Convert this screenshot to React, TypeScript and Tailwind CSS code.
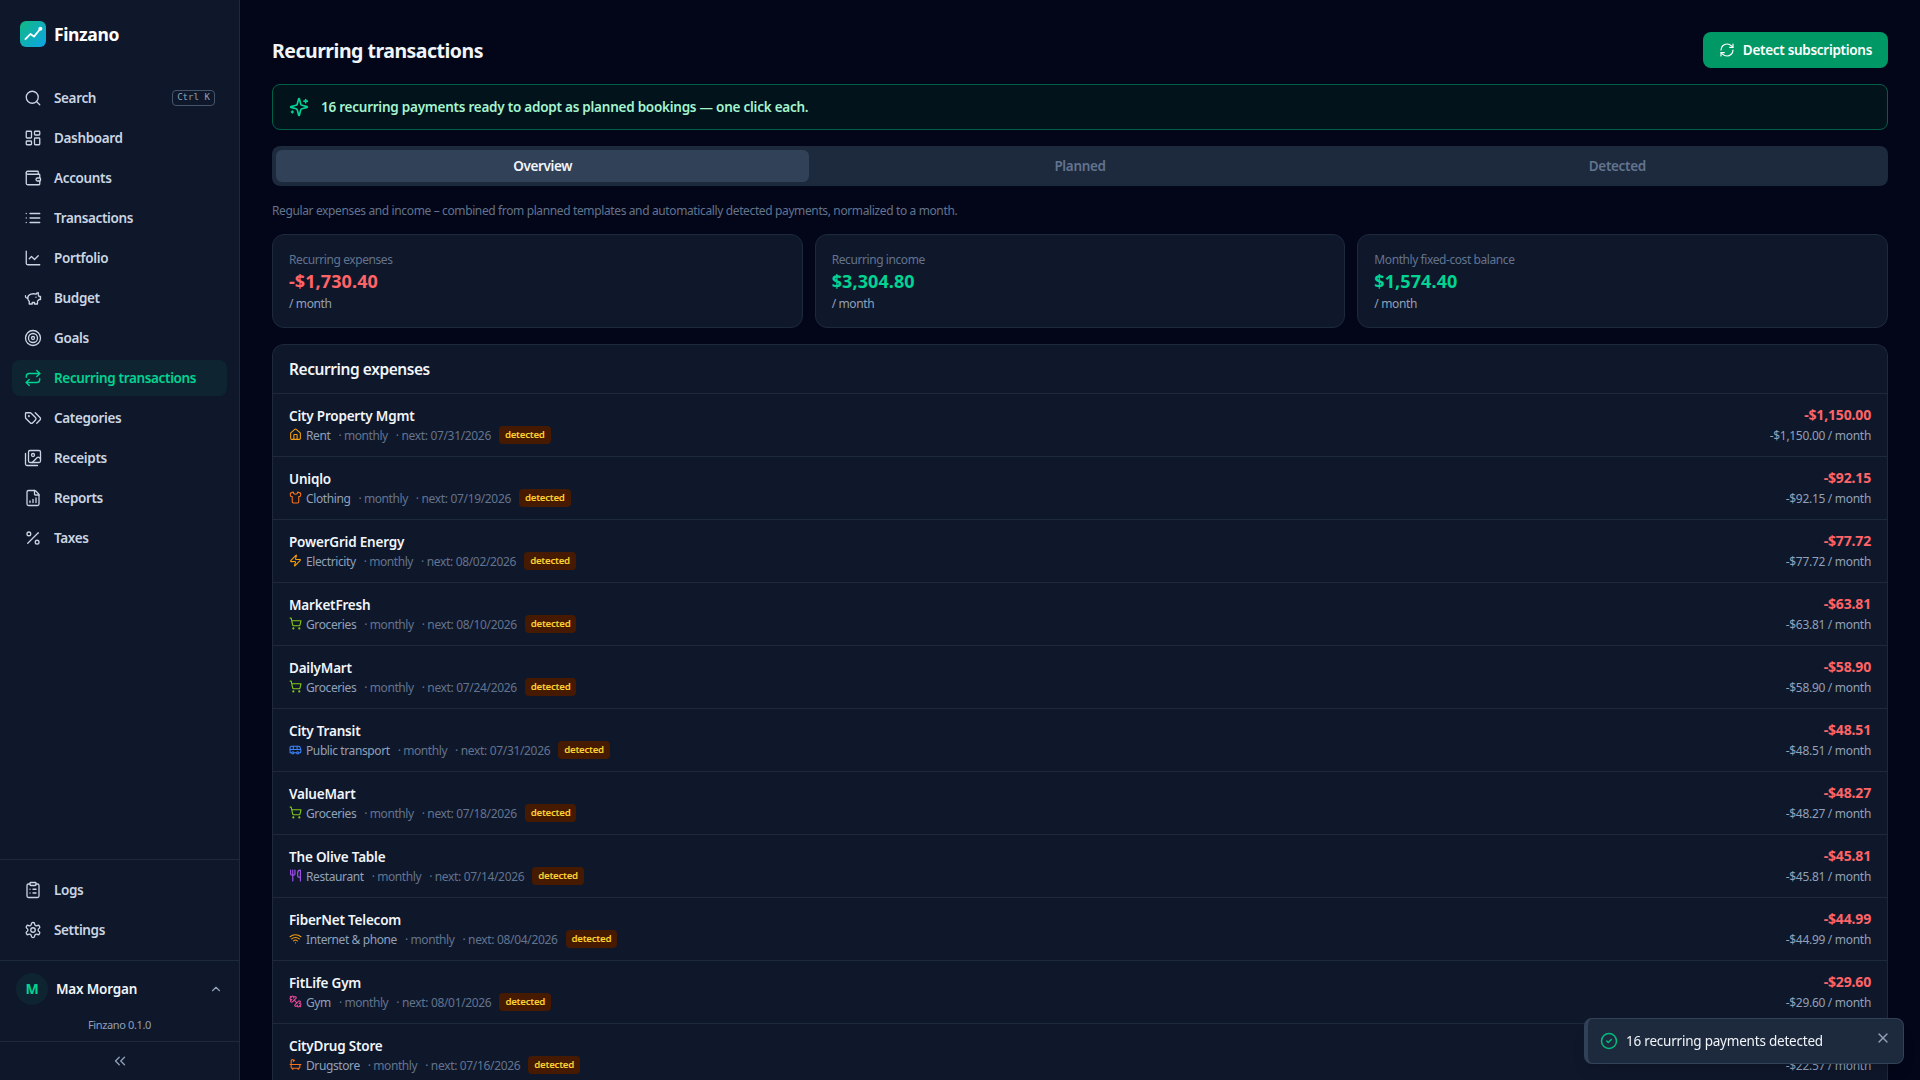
import { clsx } from 'clsx';
import {
	Bath,
	Bus,
	ChartLine,
	ChevronsLeft,
	ChevronUp,
	CircleCheck,
	ClipboardList,
	FileChartColumnIncreasing,
	House,
	LayoutDashboard,
	Percent,
	RefreshCw,
	Repeat,
	Search,
	Shirt,
	ShoppingCart,
	Target,
	Utensils,
	Wallet,
	Wifi,
	X,
	Zap,
} from 'lucide-react';
import React from 'react';

type IconProps = { size?: number; strokeWidth?: number; className?: string };
type Icon = React.ComponentType<IconProps>;
type NavEntry = { label: string; icon: Icon; shortcut?: string };

function makeIcon(content: React.ReactNode): Icon {
	return function CustomIcon({ size = 24, strokeWidth = 2, className }: IconProps) {
		return (
			<svg
				width={size}
				height={size}
				viewBox="0 0 24 24"
				fill="none"
				stroke="currentColor"
				strokeWidth={strokeWidth}
				strokeLinecap="round"
				strokeLinejoin="round"
				className={className}
			>
				{content}
			</svg>
		);
	};
}

const TagsIcon = makeIcon(
	<>
		<path d="m15 5 6.3 6.3a2.4 2.4 0 0 1 0 3.4L17 19" />
		<path d="M9.586 5.586A2 2 0 0 0 8.172 5H3a1 1 0 0 0-1 1v5.172a2 2 0 0 0 .586 1.414L8.29 18.29a2.426 2.426 0 0 0 3.42 0l3.58-3.58a2.426 2.426 0 0 0 0-3.42z" />
		<circle cx="6.5" cy="9.5" r=".5" fill="currentColor" />
	</>,
);

const ImagesIcon = makeIcon(
	<>
		<path d="M18 22H4a2 2 0 0 1-2-2V6" />
		<path d="m22 13-1.296-1.296a2.41 2.41 0 0 0-3.408 0L11 18" />
		<circle cx="12" cy="8" r="2" />
		<rect width="16" height="16" x="6" y="2" rx="2" />
	</>,
);

const ListIcon = makeIcon(
	<>
		<path d="M3 6h.01M3 12h.01M3 18h.01" />
		<path d="M8 6h13M8 12h13M8 18h13" />
	</>,
);

const PiggyIcon = makeIcon(
	<>
		<path d="M19 5c-1.5 0-2.8 1.4-3 2-3.5-1.5-11-.3-11 5 0 1.8 0 3 2 4.5V20h4v-2h3v2h4v-4c1-.5 1.7-1 2-2h2v-4h-2c0-1-.5-1.5-1-2V5z" />
		<path d="M2 9v1c0 1.1.9 2 2 2h1" />
		<path d="M16 11h.01" />
	</>,
);

const SettingsIcon = makeIcon(
	<>
		<path d="M12.22 2h-.44a2 2 0 0 0-2 2v.18a2 2 0 0 1-1 1.73l-.43.25a2 2 0 0 1-2 0l-.15-.08a2 2 0 0 0-2.73.73l-.22.38a2 2 0 0 0 .73 2.73l.15.1a2 2 0 0 1 1 1.72v.51a2 2 0 0 1-1 1.74l-.15.09a2 2 0 0 0-.73 2.73l.22.38a2 2 0 0 0 2.73.73l.15-.08a2 2 0 0 1 2 0l.43.25a2 2 0 0 1 1 1.73V20a2 2 0 0 0 2 2h.44a2 2 0 0 0 2-2v-.18a2 2 0 0 1 1-1.73l.43-.25a2 2 0 0 1 2 0l.15.08a2 2 0 0 0 2.73-.73l.22-.39a2 2 0 0 0-.73-2.73l-.15-.08a2 2 0 0 1-1-1.74v-.5a2 2 0 0 1 1-1.74l.15-.09a2 2 0 0 0 .73-2.73l-.22-.38a2 2 0 0 0-2.73-.73l-.15.08a2 2 0 0 1-2 0l-.43-.25a2 2 0 0 1-1-1.73V4a2 2 0 0 0-2-2z" />
		<circle cx="12" cy="12" r="3" />
	</>,
);

const SparklesIcon = makeIcon(
	<>
		<path d="M9.937 15.5A2 2 0 0 0 8.5 14.063l-6.135-1.582a.5.5 0 0 1 0-.962L8.5 9.936A2 2 0 0 0 9.937 8.5l1.582-6.135a.5.5 0 0 1 .963 0L14.063 8.5A2 2 0 0 0 15.5 9.937l6.135 1.581a.5.5 0 0 1 0 .964L15.5 14.063a2 2 0 0 0-1.437 1.437l-1.582 6.135a.5.5 0 0 1-.963 0z" />
		<path d="M20 3v4M22 5h-4" />
		<path d="M4 17v2M5 18H3" />
	</>,
);

const DumbbellIcon = makeIcon(
	<>
		<path d="M14.4 14.4 9.6 9.6" />
		<path d="M18.657 21.485a2 2 0 1 1-2.829-2.828l-1.767 1.768a2 2 0 1 1-2.829-2.829l6.364-6.364a2 2 0 1 1 2.829 2.829l-1.768 1.767a2 2 0 1 1 2.828 2.829z" />
		<path d="m21.5 21.5-1.4-1.4M3.9 3.9 2.5 2.5" />
		<path d="M6.404 12.768a2 2 0 1 1-2.829-2.829l1.768-1.767a2 2 0 1 1-2.828-2.829l2.828-2.828a2 2 0 1 1 2.829 2.828l1.767-1.768a2 2 0 1 1 2.829 2.829z" />
	</>,
);

const mainNav: NavEntry[] = [
	{ label: 'Search', icon: Search, shortcut: 'Ctrl K' },
	{ label: 'Dashboard', icon: LayoutDashboard },
	{ label: 'Accounts', icon: Wallet },
	{ label: 'Transactions', icon: ListIcon },
	{ label: 'Portfolio', icon: ChartLine },
	{ label: 'Budget', icon: PiggyIcon },
	{ label: 'Goals', icon: Target },
	{ label: 'Recurring transactions', icon: Repeat },
	{ label: 'Categories', icon: TagsIcon },
	{ label: 'Receipts', icon: ImagesIcon },
	{ label: 'Reports', icon: FileChartColumnIncreasing },
	{ label: 'Taxes', icon: Percent },
];

const footerNav: NavEntry[] = [
	{ label: 'Logs', icon: ClipboardList },
	{ label: 'Settings', icon: SettingsIcon },
];

const summary = [
	{ label: 'Recurring expenses', value: '-$1,730.40', negative: true },
	{ label: 'Recurring income', value: '$3,304.80', negative: false },
	{ label: 'Monthly fixed-cost balance', value: '$1,574.40', negative: false },
];

type Expense = {
	name: string;
	category: string;
	icon: Icon;
	color: string;
	next: string;
	amount: string;
};

const expenses: Expense[] = [
	{ name: 'City Property Mgmt', category: 'Rent', icon: House, color: 'text-[#f59e0b]', next: '07/31/2026', amount: '-$1,150.00' },
	{ name: 'Uniqlo', category: 'Clothing', icon: Shirt, color: 'text-[#f97316]', next: '07/19/2026', amount: '-$92.15' },
	{ name: 'PowerGrid Energy', category: 'Electricity', icon: Zap, color: 'text-[#f59e0b]', next: '08/02/2026', amount: '-$77.72' },
	{ name: 'MarketFresh', category: 'Groceries', icon: ShoppingCart, color: 'text-[#84cc16]', next: '08/10/2026', amount: '-$63.81' },
	{ name: 'DailyMart', category: 'Groceries', icon: ShoppingCart, color: 'text-[#84cc16]', next: '07/24/2026', amount: '-$58.90' },
	{ name: 'City Transit', category: 'Public transport', icon: Bus, color: 'text-[#3b82f6]', next: '07/31/2026', amount: '-$48.51' },
	{ name: 'ValueMart', category: 'Groceries', icon: ShoppingCart, color: 'text-[#84cc16]', next: '07/18/2026', amount: '-$48.27' },
	{ name: 'The Olive Table', category: 'Restaurant', icon: Utensils, color: 'text-[#a855f7]', next: '07/14/2026', amount: '-$45.81' },
	{ name: 'FiberNet Telecom', category: 'Internet & phone', icon: Wifi, color: 'text-[#f59e0b]', next: '08/04/2026', amount: '-$44.99' },
	{ name: 'FitLife Gym', category: 'Gym', icon: DumbbellIcon, color: 'text-[#ec4899]', next: '08/01/2026', amount: '-$29.60' },
	{ name: 'CityDrug Store', category: 'Drugstore', icon: Bath, color: 'text-[#f97316]', next: '07/16/2026', amount: '-$22.57' },
];

function Logo() {
	return (
		<svg width="26" height="26" viewBox="0 0 26 26" fill="none">
			<defs>
				<linearGradient id="logo" x1="0" y1="0" x2="26" y2="26" gradientUnits="userSpaceOnUse">
					<stop stopColor="#10b981" />
					<stop offset="1" stopColor="#0ea5e9" />
				</linearGradient>
			</defs>
			<rect width="26" height="26" rx="6" fill="url(#logo)" />
			<path
				d="M5.4 18.2 10.4 13 14 15.6 20.2 8"
				stroke="white"
				strokeWidth="1.8"
				strokeLinecap="round"
				strokeLinejoin="round"
			/>
			<circle cx="20.4" cy="7.8" r="2" fill="white" />
		</svg>
	);
}

function NavItem({ entry, active }: { entry: NavEntry; active?: boolean }) {
	const Icon = entry.icon;
	return (
		<a
			className={clsx(
				'flex h-9 items-center gap-3 rounded-lg px-3 text-[13.5px] font-semibold tracking-[-0.026em]',
				active ? 'bg-[#0e2531] text-emerald-400' : 'text-slate-300',
			)}
		>
			<Icon size={18} strokeWidth={1.75} className="shrink-0" />
			<span className="flex-1">{entry.label}</span>
			{entry.shortcut && (
				<kbd className="flex h-4 items-center rounded border border-slate-600 px-1 font-['DejaVu_Sans_Mono',monospace] text-[9.1px] font-normal tracking-normal text-slate-400">
					{entry.shortcut}
				</kbd>
			)}
		</a>
	);
}

function Sidebar() {
	return (
		<aside className="flex w-60 shrink-0 flex-col border-r border-slate-800 bg-slate-900">
			<div className="flex h-[68px] items-center gap-2 px-5">
				<Logo />
				<span className="text-[17.5px] font-bold tracking-[-0.022em] text-white">Finzano</span>
			</div>
			<nav className="flex flex-1 flex-col gap-1 px-3 pt-3">
				{mainNav.map((entry) => (
					<NavItem key={entry.label} entry={entry} active={entry.label === 'Recurring transactions'} />
				))}
			</nav>
			<div className="flex flex-col gap-1 border-t border-slate-800 p-3">
				{footerNav.map((entry) => (
					<NavItem key={entry.label} entry={entry} />
				))}
			</div>
			<div className="border-t border-slate-800">
				<div className="flex h-14 items-center gap-2 px-4">
					<div className="flex size-8 items-center justify-center rounded-full bg-[#0e2531] text-sm font-bold text-emerald-400">
						M
					</div>
					<span className="flex-1 text-[13.5px] font-semibold tracking-[-0.014em] text-slate-100">Max Morgan</span>
					<ChevronUp size={14} className="text-slate-400" />
				</div>
				<p className="h-6 text-center text-[11px] leading-[16px] tracking-[-0.033em] text-slate-400">Finzano 0.1.0</p>
			</div>
			<div className="flex h-[39px] items-center justify-center border-t border-slate-800 text-slate-400">
				<ChevronsLeft size={18} strokeWidth={1.75} />
			</div>
		</aside>
	);
}

function Tabs() {
	const [tab, setTab] = React.useState('Overview');
	return (
		<div className="grid h-10 grid-cols-3 gap-1 rounded-lg bg-slate-800 p-1">
			{['Overview', 'Planned', 'Detected'].map((name) => (
				<button
					key={name}
					onClick={() => setTab(name)}
					className={clsx(
						'rounded-md text-[13.5px] font-semibold tracking-[-0.026em]',
						tab === name ? 'bg-slate-700 text-slate-100' : 'text-slate-500',
					)}
				>
					{name}
				</button>
			))}
		</div>
	);
}

function ExpenseRow({ expense }: { expense: Expense }) {
	const Icon = expense.icon;
	return (
		<li className="flex h-[63px] shrink-0 items-center justify-between border-b border-slate-800 px-4">
			<div>
				<p className="text-[13.5px] font-semibold leading-5 tracking-[-0.015em] text-slate-100">{expense.name}</p>
				<div className="flex h-[18px] items-center text-xs text-slate-500">
					<Icon size={13} className={clsx('mr-1 mb-0.5 shrink-0', expense.color)} />
					<span className="pt-px tracking-[-0.033em] text-slate-400">{expense.category}</span>
					<span className="ml-2 pt-px tracking-[-0.035em]">· monthly</span>
					<span className="ml-2 pt-px tracking-[-0.028em]">· next: {expense.next}</span>
					<span className="ml-2 flex h-[18px] items-center rounded bg-amber-950 px-1.5 text-[9.7px] font-semibold tracking-[-0.028em] text-amber-300">
						detected
					</span>
				</div>
			</div>
			<div className="text-right">
				<p className="text-sm leading-[18px] font-bold tracking-[-0.012em] text-red-400">{expense.amount}</p>
				<p className="pt-1 text-xs leading-4 tracking-[-0.025em] text-slate-400">{expense.amount} / month</p>
			</div>
		</li>
	);
}

function Toast() {
	return (
		<div className="fixed right-4 bottom-4 flex h-[46px] w-80 items-center gap-2 rounded-lg border border-l-4 border-slate-700 bg-slate-800 px-3 shadow-lg">
			<CircleCheck size={18} className="shrink-0 text-emerald-500" />
			<span className="flex-1 text-[13.5px] tracking-[-0.016em] text-slate-100">16 recurring payments detected</span>
			<X size={16} className="mb-1.5 text-slate-400" />
		</div>
	);
}

export default function App() {
	return (
		<div className="flex h-screen overflow-hidden bg-slate-950 font-['Noto_Sans',sans-serif]">
			<Sidebar />
			<main className="flex min-w-0 flex-1 flex-col gap-4 overflow-hidden px-8 pt-8">
				<header className="flex h-9 shrink-0 items-center justify-between">
					<h1 className="pt-0.5 text-[19.5px] font-bold tracking-[-0.026em] text-slate-100">Recurring transactions</h1>
					<button className="flex h-9 items-center gap-2 rounded-lg bg-emerald-600 px-4 text-[13.5px] font-semibold tracking-[-0.022em] text-white">
						<RefreshCw size={16} strokeWidth={1.75} />
						Detect subscriptions
					</button>
				</header>
				<div className="flex h-[46px] shrink-0 items-center gap-3 rounded-lg border border-emerald-800 bg-[#02131b] px-4 text-[13.5px] font-semibold tracking-[-0.018em] text-emerald-200">
					<SparklesIcon size={20} className="text-emerald-400" />
					16 recurring payments ready to adopt as planned bookings — one click each.
				</div>
				<div className="shrink-0">
					<Tabs />
				</div>
				<p className="h-4 shrink-0 pt-px text-xs leading-4 tracking-[-0.031em] text-slate-500">
					Regular expenses and income – combined from planned templates and automatically detected payments, normalized to a month.
				</p>
				<div className="grid shrink-0 grid-cols-3 gap-3">
					{summary.map((card) => (
						<div key={card.label} className="h-[94px] rounded-xl border border-slate-800 bg-slate-900 px-4 pt-[17px]">
							<p className="text-xs leading-4 tracking-[-0.035em] text-slate-500">{card.label}</p>
							<p
								className={clsx(
									'text-lg leading-[27px] font-bold tracking-[0.005em]',
									card.negative ? 'text-red-400' : 'text-emerald-400',
								)}
							>
								{card.value}
							</p>
							<p className="pt-px text-xs leading-4 tracking-[-0.031em] text-slate-400">/ month</p>
						</div>
					))}
				</div>
				<section className="flex min-h-0 flex-1 flex-col overflow-hidden rounded-t-xl border border-b-0 border-slate-800 bg-slate-900">
					<h2 className="flex h-[49px] shrink-0 items-center border-b border-slate-800 px-4 pt-0.5 text-[15.5px] font-semibold tracking-[-0.028em] text-slate-100">
						Recurring expenses
					</h2>
					<ul>
						{expenses.map((expense) => (
							<ExpenseRow key={expense.name} expense={expense} />
						))}
					</ul>
				</section>
			</main>
			<Toast />
		</div>
	);
}
